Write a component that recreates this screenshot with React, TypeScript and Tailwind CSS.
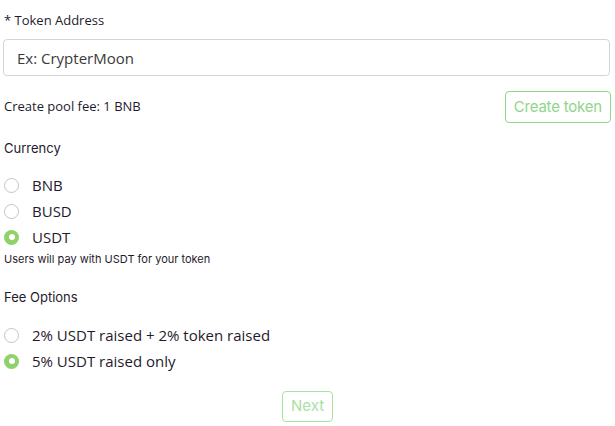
import React, { useState } from 'react';

const segoe = "font-['Open_Sans','Noto_Sans',sans-serif]";
const mont = "font-['Inter','Lato',sans-serif]";

const Radio = ({ checked, label, onClick }: { checked: boolean; label: string; onClick: () => void }) => (
  <label onClick={onClick} className="flex items-center h-[26px] cursor-pointer">
    {checked ? (
      <span className="w-[15px] h-[15px] rounded-full bg-[#8fd16a] flex items-center justify-center ml-[3px]">
        <span className="w-[6px] h-[6px] rounded-full bg-white" />
      </span>
    ) : (
      <span className="w-[15px] h-[15px] rounded-full border border-[#c4c4c4] bg-white ml-[3px]" />
    )}
    <span className={`${segoe} ml-[13px] text-[15px] text-[#1f1b2d]`}>{label}</span>
  </label>
);

export default function App() {
  const [currency, setCurrency] = useState('USDT');
  const [fee, setFee] = useState('5');

  return (
    <div className="w-[615px] h-[426px] bg-white px-[4px] overflow-hidden">
      {/* Token address */}
      <div className={`${segoe} pt-[10px] text-[13px] text-[#1f1b2d] leading-[20px]`}>* Token Address</div>
      <input
        className={`${segoe} mt-[9px] ml-[-1px] w-[607px] h-[37px] border border-[#d4d4d8] rounded-[4px] px-[13px] text-[15px] text-[#333] placeholder:text-[#3a3a3a] outline-none`}
        placeholder="Ex: CrypterMoon"
      />

      <div className="flex items-center justify-between mt-[15px]">
        <span className={`${segoe} text-[13px] text-[#1f1b2d]`}>Create pool fee: 1 BNB</span>
        <button className={`${mont} h-[32px] px-[8px] border border-[#8fd98a] rounded-[4px] text-[15px] text-[#8fd48a] bg-white tracking-[-0.2px]`}>
          Create token
        </button>
      </div>

      <div className={`${mont} mt-[17px] text-[13px] text-[#1f1b2d] leading-[16px]`}>Currency</div>

      <div className="mt-[16px] flex flex-col ml-[-3px]">
        {['BNB', 'BUSD', 'USDT'].map((c) => (
          <Radio key={c} checked={currency === c} label={c} onClick={() => setCurrency(c)} />
        ))}
      </div>
      <div className={`${mont} text-[11px] text-[#1f1b2d] leading-[14px] mt-[2px]`}>Users will pay with {currency} for your token</div>

      <div className={`${mont} mt-[23px] text-[13px] text-[#1f1b2d] leading-[16px]`}>Fee Options</div>

      <div className="mt-[17px] flex flex-col ml-[-3px]">
        <Radio checked={fee === '2'} label="2% USDT raised + 2% token raised" onClick={() => setFee('2')} />
        <Radio checked={fee === '5'} label="5% USDT raised only" onClick={() => setFee('5')} />
      </div>

      <div className="flex justify-center mt-[17px]">
        <button className={`${mont} h-[31px] px-[8px] border border-[#a8e2a3] rounded-[4px] text-[15px] text-[#a8e0a3] bg-white`}>
          Next
        </button>
      </div>
    </div>
  );
}
